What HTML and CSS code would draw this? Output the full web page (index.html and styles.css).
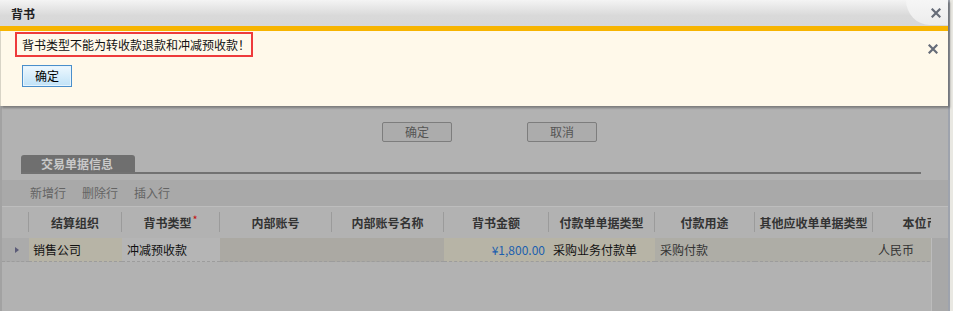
FILE: index.html
```html
<!DOCTYPE html>
<html>
<head>
    <title>背书</title>
    <link rel="stylesheet" href="styles.css">
</head>
<body>
    <div class="page">
        <div class="actions">
            <span class="btn">确定</span>
            <span class="btn">取消</span>
        </div>
        <div class="tabbar"><span class="tab">交易单据信息</span></div>
        <div class="toolbar">
            <span>新增行</span>
            <span>删除行</span>
            <span>插入行</span>
        </div>
        <div class="grid-wrap">
            <div class="grid-clip">
                <div class="grid">
                    <div class="th"><span class="hc"></span></div>
                    <div class="th"><span class="hc">结算组织</span></div>
                    <div class="th"><span class="hc">背书类型<i class="req">*</i></span></div>
                    <div class="th"><span class="hc">内部账号</span></div>
                    <div class="th"><span class="hc">内部账号名称</span></div>
                    <div class="th"><span class="hc">背书金额</span></div>
                    <div class="th"><span class="hc">付款单单据类型</span></div>
                    <div class="th"><span class="hc">付款用途</span></div>
                    <div class="th"><span class="hc">其他应收单单据类型</span></div>
                    <div class="th"><span class="hc">本位币</span></div>

                    <div class="td rowhead"><span class="arrow"></span></div>
                    <div class="td beige">销售公司</div>
                    <div class="td plain">冲减预收款</div>
                    <div class="td dull"></div>
                    <div class="td dull"></div>
                    <div class="td beige money">¥1,800.00</div>
                    <div class="td beige">采购业务付款单</div>
                    <div class="td ro">采购付款</div>
                    <div class="td ro"></div>
                    <div class="td ro">人民币</div>
                </div>
            </div>
            <div class="vscroll"></div>
        </div>
    </div>

    <div class="dialog">
        <div class="dialog-title">
            <span>背书</span>
            <svg class="close" width="10" height="10" viewBox="0 0 10 10"><path d="M1.5 1.5L8.5 8.5M8.5 1.5L1.5 8.5" stroke="#666c78" stroke-width="2.2" stroke-linecap="square"/></svg>
        </div>
        <div class="dialog-body">
            <div class="msg">背书类型不能为转收款退款和冲减预收款！</div>
            <div><span class="ok">确定</span></div>
            <svg class="close msg-close" width="10" height="10" viewBox="0 0 10 10"><path d="M1.5 1.5L8.5 8.5M8.5 1.5L1.5 8.5" stroke="#666c78" stroke-width="2.2" stroke-linecap="square"/></svg>
        </div>
    </div>
</body>
</html>
```

FILE: styles.css
```css
body {
    margin: 0;
    width: 953px;
    height: 311px;
    overflow: hidden;
    background: #e9e8e2;
    font-family: "Noto Sans CJK SC", "DejaVu Sans", sans-serif;
    font-size: 12px;
    position: relative;
}
.page {
    width: 950px;
    height: 311px;
    box-sizing: border-box;
    background: #b2b2b2;
    border-left: 2px solid #a2a2a2;
    border-right: 2px solid #9ea3ad;
    padding-top: 122px;
}
.actions {
    display: flex;
    gap: 75px;
    padding-left: 380px;
}
.btn {
    width: 70px;
    height: 20px;
    box-sizing: border-box;
    border: 1px solid #7d7d7d;
    border-radius: 2px;
    background: #acacac;
    color: #555;
    text-align: center;
    line-height: 18px;
}
.tabbar {
    margin: 13px 0 0 19px;
    width: 900px;
    height: 17px;
    border-bottom: 2px solid #727272;
}
.tab {
    display: inline-block;
    width: 114px;
    height: 17px;
    box-sizing: border-box;
    padding-left: 20px;
    background: #6f6f6f;
    border-radius: 3px 3px 0 0;
    color: #c9c9c9;
    font-weight: bold;
    line-height: 17px;
}
.toolbar {
    margin-top: 6px;
    height: 26px;
    background: #a9a9a9;
    display: flex;
    gap: 16px;
    padding-left: 28px;
    line-height: 26px;
    color: #646464;
}
.grid-wrap {
    display: flex;
    border-top: 1px solid #bdbdbd;
}
.grid-clip {
    width: 930px;
    overflow: hidden;
}
.grid {
    display: grid;
    grid-template-columns: 27px 93px 98px 112px 112px 105px 106px 100px 118px 96px;
    width: 967px;
}
.th {
    height: 31px;
    box-sizing: border-box;
    padding: 5px 0 6px;
}
.hc {
    display: flex;
    align-items: center;
    justify-content: center;
    height: 20px;
    border-right: 1px solid #9b9b9b;
    font-weight: bold;
    color: #333;
    white-space: nowrap;
}
.req {
    color: #c41010;
    font-style: normal;
    font-weight: normal;
    font-size: 11px;
    margin: -6px 0 0 1px;
}
.td {
    height: 24px;
    box-sizing: border-box;
    border-bottom: 1px dashed #9c9c9c;
    padding-left: 4px;
    line-height: 23px;
    color: #111;
    white-space: nowrap;
}
.rowhead {
    background: #ababab;
    display: flex;
    align-items: center;
    padding-left: 13px;
}
.arrow {
    width: 0;
    height: 0;
    border-left: 4px solid #5b5b78;
    border-top: 3px solid transparent;
    border-bottom: 3px solid transparent;
}
.beige {
    background: #b7b4a6;
}
.plain {
    background: #b5b5b5;
    padding-left: 5px;
}
.dull {
    background: #aba9a3;
}
.ro {
    background: #aeada6;
    color: #333;
    padding-left: 5px;
}
.money {
    color: #1c5fae;
    text-align: right;
    padding-right: 4px;
}
.vscroll {
    width: 16px;
    margin-top: 31px;
    height: 80px;
    background: #a8a8a8;
    border-left: 1px solid #bcbcbc;
}

.dialog {
    position: absolute;
    left: 0;
    top: 0;
    width: 948px;
    box-shadow: 2px 2px 2px rgba(60, 60, 60, 0.45);
}
.dialog-title {
    position: relative;
    height: 26px;
    display: flex;
    align-items: center;
    justify-content: space-between;
    padding: 0 7px 0 11px;
    background: linear-gradient(#f4f4f4, #d9d9d9 60%, #d8d8d8);
    border-bottom: 5px solid #f7b400;
    font-weight: bold;
    color: #1e1e1e;
}
.dialog-title::after {
    content: "";
    position: absolute;
    right: 0;
    top: 0;
    width: 42px;
    height: 25px;
    background: linear-gradient(#f6f6f6, #ececec);
    border-bottom-left-radius: 24px 25px;
}
.close {
    position: relative;
    z-index: 1;
}
.dialog-body {
    position: relative;
    height: 75px;
    box-sizing: border-box;
    padding: 1px 0 0 14px;
    background: #fff9ea;
    border-left: 1px solid #d8d4c6;
}
.msg {
    width: 238px;
    height: 25px;
    box-sizing: border-box;
    border: 2px solid #ee3b3b;
    padding-left: 5px;
    line-height: 21px;
    color: #111;
}
.ok {
    display: inline-block;
    margin: 8px 0 0 7px;
    width: 50px;
    height: 22px;
    box-sizing: border-box;
    border: 1px solid #4a8fcb;
    background: linear-gradient(#eef8fe, #c0e2f7);
    box-shadow: inset 0 0 0 1px #e6f4fd;
    text-align: center;
    line-height: 20px;
    color: #000;
}
.msg-close {
    position: absolute;
    right: 10px;
    top: 13px;
}
```
